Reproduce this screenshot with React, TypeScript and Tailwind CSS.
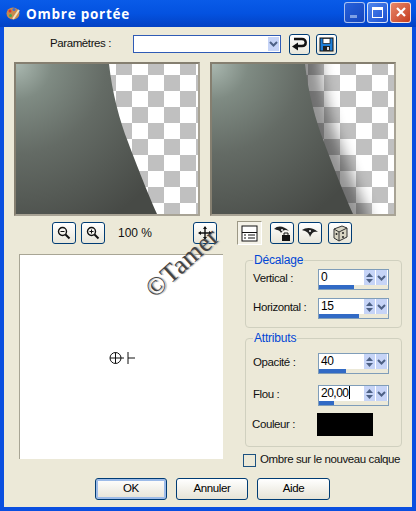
// App.tsx — "Ombre portée" XP dialog
import type { ReactNode } from 'react';

const CURVE = 'M0 0 L93 0 C96 28 104 58 112 78 C118 94 130 125 141 150 L0 150 Z';

function Preview({ id, offset, shadow }: { id: string; offset: number; shadow?: boolean }) {
  return (
    <div className="w-[186px] h-[154px] border-2 border-[#857f70] border-r-[#a8a395] border-b-[#a8a395] bg-white">
      <svg width="182" height="150" className="block">
        <defs>
          <pattern id={`${id}-c`} width="32" height="32" patternUnits="userSpaceOnUse" patternTransform={`translate(${offset} 11)`}>
            <rect width="32" height="32" fill="#fff" />
            <rect width="16" height="16" fill="#c0c0c0" y="16" />
            <rect width="16" height="16" fill="#c0c0c0" x="16" />
          </pattern>
          <radialGradient id={`${id}-g`} gradientUnits="userSpaceOnUse" cx="0" cy="0" r="180">
            <stop offset="0" stopColor="#aab8b0" />
            <stop offset="0.2" stopColor="#7f8b83" />
            <stop offset="0.5" stopColor="#646b65" />
            <stop offset="1" stopColor="#474a46" />
          </radialGradient>
          <filter id={`${id}-b`} x="-30%" y="-30%" width="160%" height="160%">
            <feGaussianBlur stdDeviation="7" />
          </filter>
        </defs>
        <rect width="182" height="150" fill={`url(#${id}-c)`} />
        {shadow && (
          <path d="M-20 -20 L93 -20 L93 0 C96 28 104 58 112 78 C118 94 130 125 141 150 L141 175 L-20 175 Z" transform="translate(15 0)" fill="#000" opacity="0.42" filter={`url(#${id}-b)`} />
        )}
        <path d={CURVE} fill={`url(#${id}-g)`} />
      </svg>
    </div>
  );
}

function ToolBtn({ children, className = '' }: { children: ReactNode; className?: string }) {
  return (
    <button className={`w-6 h-[22px] shrink-0 flex items-center justify-center rounded-[3px] border border-[#003c74] bg-gradient-to-b from-white to-[#e8e6da] ${className}`}>
      {children}
    </button>
  );
}

function Spin({ value, bar, caret, label, className = '' }: { value: string; bar: string; caret?: boolean; label: string; className?: string }) {
  return (
    <div className={`flex items-start ${className}`}>
      <span className="w-[65px] pt-[1px]">{label}</span>
      <div className="w-[71px] h-[21px] border border-[#7f9db9] bg-white relative flex flex-col">
        <div className="flex flex-1 items-start">
          <span className="flex-1 pl-[2px] leading-[15px] text-[12px] tracking-[-0.5px] text-black">
            {value}
            {caret && <span className="inline-block w-px h-[13px] bg-black align-[-2px]" />}
          </span>
          <div className="w-[11px] h-[15px] mr-px bg-[#c6d4f7] flex flex-col items-center justify-center gap-[2px]">
            <svg width="7" height="4"><path d="M3.5 0 L7 4 L0 4 Z" fill="#4d6185" /></svg>
            <svg width="7" height="4"><path d="M0 0 L7 0 L3.5 4 Z" fill="#4d6185" /></svg>
          </div>
          <div className="w-[11px] h-[15px] mr-px bg-[#c6d4f7] flex items-center justify-center">
            <svg width="9" height="6"><path d="M1 1 L4.5 4.5 L8 1" fill="none" stroke="#4d6185" strokeWidth="2" /></svg>
          </div>
        </div>
        <div className="h-1 bg-[#ece9d8] w-full">
          <div className={`h-1 bg-[#316ac5] ${bar}`} />
        </div>
      </div>
    </div>
  );
}

function DlgBtn({ children, active, className = 'w-[72px]' }: { children: ReactNode; active?: boolean; className?: string }) {
  return (
    <button className={`h-[22px] rounded-[3px] border border-[#003c74] bg-gradient-to-b from-white to-[#e6e3d6] text-black ${className} ${active ? 'shadow-[inset_0_0_0_2px_#9dbbe8]' : ''}`}>
      {children}
    </button>
  );
}

function TitleBtn({ children, className }: { children: ReactNode; className: string }) {
  return (
    <div className={`w-[21px] h-[21px] rounded-[3px] border border-white/80 flex items-center justify-center ${className}`}>
      {children}
    </div>
  );
}

export default function App() {
  return (
    <div className="w-[416px] h-[511px] relative overflow-hidden flex flex-col bg-[#0a4fe0] text-[11.5px] tracking-[-0.4px] text-[#111] font-['Liberation_Sans',Arial,sans-serif]">
      {/* title bar */}
      <div className="h-[27px] shrink-0 flex items-center pl-[6px] pr-[5px] bg-gradient-to-b from-[#0a5be8] via-[#0452e0] to-[#0341c4]">
        <svg width="15" height="15" viewBox="0 0 15 15" className="shrink-0">
          <ellipse cx="7" cy="7.5" rx="6.5" ry="6" fill="#c98a4e" />
          <circle cx="4" cy="5" r="1.5" fill="#d33" />
          <circle cx="8" cy="3.5" r="1.5" fill="#3b6fd8" />
          <circle cx="4.5" cy="9.5" r="1.5" fill="#4aa84a" />
          <path d="M7 13 L13 4" stroke="#f2e3c0" strokeWidth="2" />
        </svg>
        <span className="ml-[5px] mt-px text-white font-bold text-[13.5px] tracking-[0.75px] font-['Open_Sans',sans-serif]">Ombre portée</span>
        <div className="ml-auto flex gap-[2px] mt-[-3px]">
          <TitleBtn className="bg-gradient-to-br from-[#2f63d8] to-[#1a45b8] opacity-80 border-white/40">
            <div className="w-[7px] h-[3px] bg-[#9db4e8] mt-[9px] mr-[3px]" />
          </TitleBtn>
          <TitleBtn className="bg-gradient-to-br from-[#4f86ee] to-[#1c4fd0]">
            <div className="w-[11px] h-[11px] border border-white border-t-[3px]" />
          </TitleBtn>
          <TitleBtn className="bg-gradient-to-br from-[#e8876a] to-[#c43a1a]">
            <svg width="12" height="12"><path d="M2 2 L10 10 M10 2 L2 10" stroke="#fff" strokeWidth="2.2" /></svg>
          </TitleBtn>
        </div>
      </div>

      {/* client area */}
      <div className="flex-1 mx-1 mb-1 bg-[#ece9d8] flex flex-col min-h-0 relative">
        {/* presets */}
        <div className="flex items-center mt-2 h-[18px]">
          <span className="ml-[46px] w-[83px]">Paramètres :</span>
          <div className="w-[148px] h-[18px] border border-[#2f5bb5] bg-white flex justify-end items-center pr-px">
            <div className="w-[11px] h-[14px] bg-[#c6d4f7] flex items-center justify-center">
              <svg width="9" height="6"><path d="M1 1 L4.5 4.5 L8 1" fill="none" stroke="#4d6185" strokeWidth="2" /></svg>
            </div>
          </div>
          <ToolBtn className="ml-2 !w-[21px] !h-[21px]">
            <svg width="17" height="15" viewBox="0 0 17 15">
              <path d="M3 2 L11 2 C16 2 16 9 11 9 L6 9" fill="none" stroke="#111" strokeWidth="2.4" />
              <path d="M1 9.5 L7 5.5 L7 13.5 Z" fill="#111" />
            </svg>
          </ToolBtn>
          <ToolBtn className="ml-[6px] !w-[21px] !h-[21px]">
            <svg width="15" height="15" viewBox="0 0 15 15">
              <rect x="1" y="1" width="13" height="13" fill="#1e7fd8" stroke="#111" />
              <rect x="4" y="1.5" width="7" height="5" fill="#fff" stroke="#111" strokeWidth="0.7" />
              <rect x="4" y="9" width="7" height="5" fill="#222" />
              <rect x="8" y="10" width="2" height="3" fill="#ddd" />
            </svg>
          </ToolBtn>
        </div>

        {/* previews */}
        <div className="flex mt-[9px] ml-[10px] gap-[10px]">
          <Preview id="src" offset={4} />
          <Preview id="dst" offset={0} shadow />
        </div>

        {/* toolbar */}
        <div className="flex items-center mt-[6px] h-[22px] ml-[48px]">
          <ToolBtn>
            <svg width="14" height="14" viewBox="0 0 14 14"><circle cx="5.5" cy="5.5" r="4" fill="none" stroke="#111" strokeWidth="1.4" /><path d="M3.5 5.5 H7.5" stroke="#111" /><path d="M8.5 8.5 L12.5 12.5" stroke="#111" strokeWidth="2" /></svg>
          </ToolBtn>
          <ToolBtn className="ml-[5px]">
            <svg width="14" height="14" viewBox="0 0 14 14"><circle cx="5.5" cy="5.5" r="4" fill="none" stroke="#111" strokeWidth="1.4" /><path d="M3.5 5.5 H7.5 M5.5 3.5 V7.5" stroke="#111" /><path d="M8.5 8.5 L12.5 12.5" stroke="#111" strokeWidth="2" /></svg>
          </ToolBtn>
          <span className="ml-[13px] w-[75px] text-[12px] tracking-normal">100 %</span>
          <ToolBtn>
            <svg width="14" height="14" viewBox="0 0 14 14"><path d="M7 1 V13 M1 7 H13" stroke="#111" strokeWidth="1.4" /><path d="M7 0 L9 3 H5 Z M7 14 L9 11 H5 Z M0 7 L3 5 V9 Z M14 7 L11 5 V9 Z" fill="#111" /></svg>
          </ToolBtn>
          <div className="ml-5 w-[25px] h-6 shrink-0 flex items-center justify-center border border-[#9c9885] border-r-white border-b-white bg-[#f4f2e8]">
            <svg width="17" height="17" viewBox="0 0 17 17">
              <rect x="1" y="1" width="15" height="15" fill="#fff" stroke="#111" />
              <path d="M1 7.5 H16" stroke="#111" />
              <path d="M3 10 H5 M7 10 H14 M3 13 H5 M7 13 H14" stroke="#111" strokeWidth="1.2" />
            </svg>
          </div>
          <ToolBtn className="ml-2">
            <svg width="18" height="18" viewBox="0 0 18 18">
              <path d="M1 5 C5 1 11 2 16 7 C12 5 10 6 8 9 C7 6 4 6 1 5 Z" fill="#222" />
              <circle cx="9" cy="6" r="1" fill="#fff" />
              <rect x="9" y="11" width="8" height="6" fill="#111" />
              <path d="M11 11 V9 H15 V11" fill="none" stroke="#111" />
            </svg>
          </ToolBtn>
          <ToolBtn className="ml-1">
            <svg width="18" height="13" viewBox="0 0 18 13">
              <path d="M1 3 C5 0 12 0 17 5 C13 4 11 5 9 10 C8 5 4 4 1 3 Z" fill="#222" />
              <circle cx="9" cy="4" r="1" fill="#fff" />
            </svg>
          </ToolBtn>
          <ToolBtn className="ml-[6px]">
            <svg width="17" height="17" viewBox="0 0 17 17">
              <path d="M2 4 L10 1 L15 3 L15 12 L7 16 L2 13 Z" fill="#d8d4c2" stroke="#333" />
              <path d="M2 4 L7 7 L15 3 M7 7 V16" fill="none" stroke="#333" />
              <circle cx="4.5" cy="9" r="1" fill="#222" /><circle cx="11" cy="8" r="1" fill="#222" /><circle cx="11" cy="12" r="1" fill="#222" />
            </svg>
          </ToolBtn>
        </div>

        {/* lower part */}
        <div className="flex mt-[10px] ml-[15px]">
          <div className="w-[204px] h-[205px] shrink-0 bg-white border-l border-t border-[#a8a595] flex items-center justify-center">
            <svg width="28" height="14" viewBox="0 0 28 14" className="mr-[-2px] mt-[2px]">
              <g fill="none" stroke="#111">
                <circle cx="6.5" cy="7" r="5.5" />
                <path d="M1 7 H15 M6.5 1.5 V12.5 M19 1 V13 M19 7 H26" />
              </g>
            </svg>
          </div>
          <div className="w-[160px] ml-[20px] flex flex-col">
            <fieldset className="ml-[2px] w-[157px] h-[75px] -mt-px border border-[#d0d0bf] rounded-[4px] pl-[7px] pr-0">
              <legend className="text-[#0046d5] text-[12px] leading-[15px] tracking-[-0.2px] px-px">Décalage</legend>
              <Spin label="Vertical :" value="0" bar="w-[35px]" className="mt-[1px]" />
              <Spin label="Horizontal :" value="15" bar="w-10" className="mt-2" />
            </fieldset>
            <fieldset className="ml-[2px] w-[157px] h-[116px] mt-[3px] border border-[#d0d0bf] rounded-[4px] pl-[7px] pr-0">
              <legend className="text-[#0046d5] text-[12px] leading-[15px] tracking-[-0.2px] px-px">Attributs</legend>
              <Spin label="Opacité :" value="40" bar="w-[27px]" className="mt-[7px]" />
              <Spin label="Flou :" value="20,00" caret bar="w-[15px]" className="mt-[11px]" />
              <div className="flex items-center mt-[7px] -ml-px">
                <span className="w-[65px]">Couleur :</span>
                <div className="w-[56px] h-[23px] bg-black" />
              </div>
            </fieldset>
            <label className="flex items-center mt-[6px] h-[14px]">
              <span className="w-[13px] h-[13px] shrink-0 border border-[#1c5180] bg-[#ece9d8]" />
              <span className="ml-1 whitespace-nowrap">Ombre sur le nouveau calque</span>
            </label>
          </div>
        </div>

        {/* actions */}
        <div className="flex mt-auto mb-[7px] ml-[91px] gap-[9px]">
          <DlgBtn active>OK</DlgBtn>
          <DlgBtn>Annuler</DlgBtn>
          <DlgBtn className="w-[73px]">Aide</DlgBtn>
        </div>

        {/* watermark pasted over the dialog */}
        <span className="absolute left-[134px] top-[223px] -rotate-[42deg] text-[26px] leading-none text-[#444] tracking-[0.5px] whitespace-nowrap font-['Liberation_Serif',serif] [text-shadow:1px_1px_1px_#aaa]">
          ©Tamer
        </span>
      </div>
    </div>
  );
}
